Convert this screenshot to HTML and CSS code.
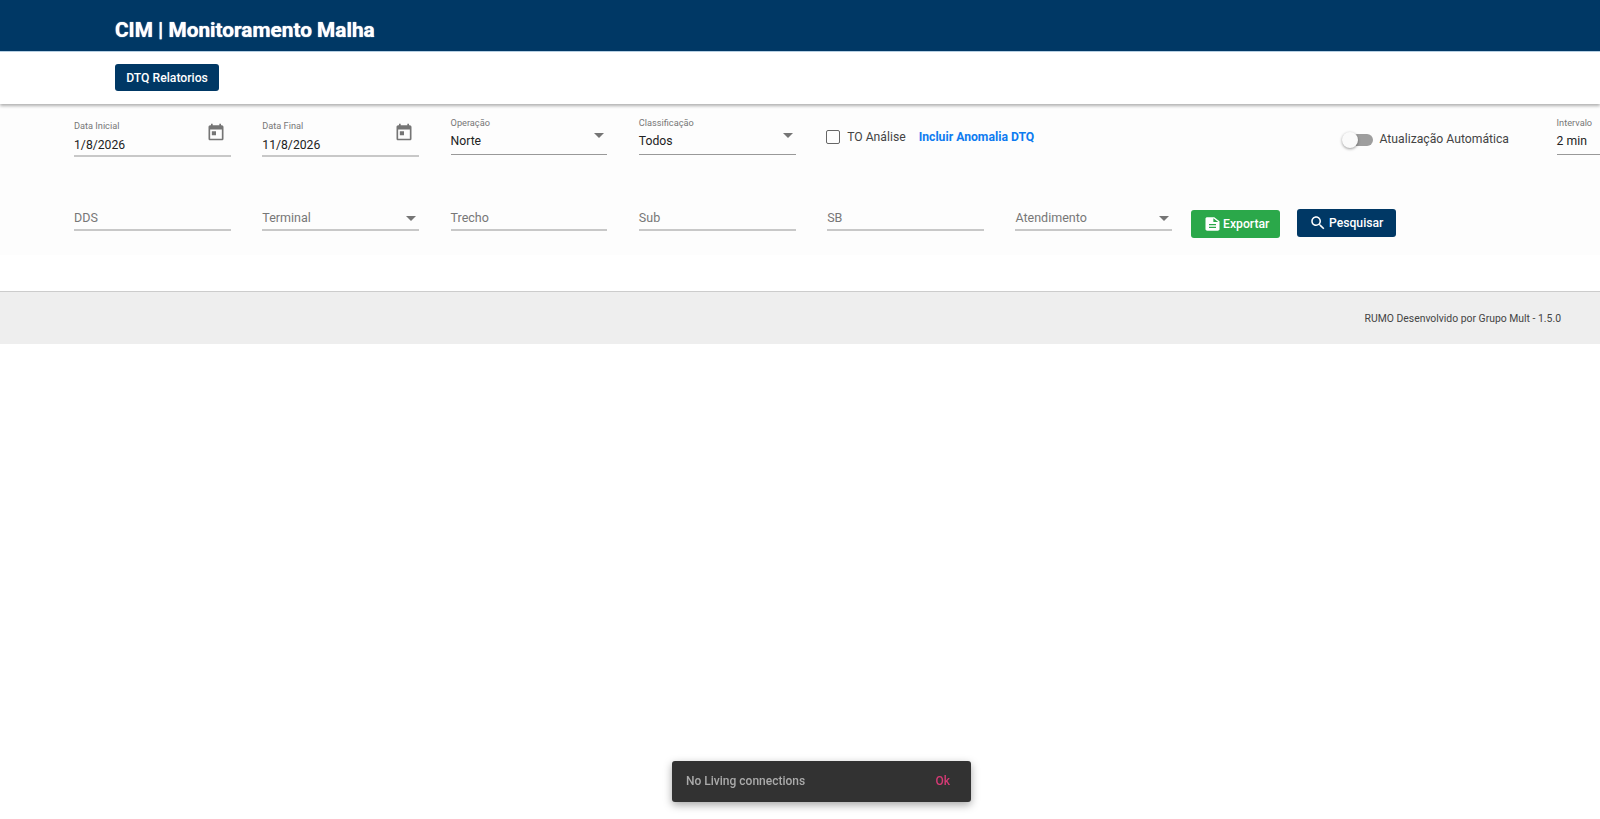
FILE: index.html
```html
<!DOCTYPE html>
<html lang="pt-BR">
<head>
    <meta charset="UTF-8">
    <meta name="viewport" content="width=device-width, initial-scale=1.0">
    <title>CIM | Monitoramento Malha</title>
    <link rel="stylesheet" href="styles.css">
</head>
<body>
    <header class="topbar">
        <h1>CIM | Monitoramento Malha</h1>
    </header>

    <nav class="subbar">
        <button class="btn btn-navy btn-nav">DTQ Relatorios</button>
    </nav>

    <!-- Filtros -->
    <section class="filters">
        <div class="filter-row row-top">
            <div class="field field-date">
                <span class="field-label">Data Inicial</span>
                <span class="field-value">1/8/2026</span>
                <svg class="icon-date" viewBox="0 0 24 24"><path d="M19 4h-1V2h-2v2H8V2H6v2H5c-1.11 0-1.99.9-1.99 2L3 20c0 1.1.89 2 2 2h14c1.1 0 2-.9 2-2V6c0-1.1-.9-2-2-2zm0 16H5V9h14v11zM7 11h5v5H7z"/></svg>
            </div>
            <div class="field field-date">
                <span class="field-label">Data Final</span>
                <span class="field-value">11/8/2026</span>
                <svg class="icon-date" viewBox="0 0 24 24"><path d="M19 4h-1V2h-2v2H8V2H6v2H5c-1.11 0-1.99.9-1.99 2L3 20c0 1.1.89 2 2 2h14c1.1 0 2-.9 2-2V6c0-1.1-.9-2-2-2zm0 16H5V9h14v11zM7 11h5v5H7z"/></svg>
            </div>
            <div class="field field-select">
                <span class="field-label">Operação</span>
                <span class="field-value">Norte</span>
                <span class="arrow arrow-top"></span>
            </div>
            <div class="field field-select">
                <span class="field-label">Classificação</span>
                <span class="field-value">Todos</span>
                <span class="arrow arrow-top"></span>
            </div>
            <div class="check-group">
                <span class="checkbox"></span>
                <span class="check-label">TO Análise</span>
                <a class="link-anomalia">Incluir Anomalia DTQ</a>
            </div>
            <div class="toggle-group">
                <span class="toggle"><span class="toggle-thumb"></span></span>
                <span class="toggle-label">Atualização Automática</span>
            </div>
            <div class="field field-select field-interval">
                <span class="field-label">Intervalo</span>
                <span class="field-value">2 min</span>
            </div>
        </div>

        <div class="filter-row row-bottom">
            <div class="field field-text"><span class="placeholder">DDS</span></div>
            <div class="field field-text"><span class="placeholder">Terminal</span><span class="arrow"></span></div>
            <div class="field field-text"><span class="placeholder">Trecho</span></div>
            <div class="field field-text"><span class="placeholder">Sub</span></div>
            <div class="field field-text"><span class="placeholder">SB</span></div>
            <div class="field field-text"><span class="placeholder">Atendimento</span><span class="arrow"></span></div>
            <div class="actions">
                <button class="btn btn-green">
                    <svg class="icon-doc" viewBox="0 0 24 24" preserveAspectRatio="none"><path d="M14 2H6c-1.1 0-1.99.9-1.99 2L4 20c0 1.1.89 2 2 2h12c1.1 0 2-.9 2-2V8l-6-6zm2 16H8v-2h8v2zm0-4H8v-2h8v2zm-3-5V3.5L18.5 9H13z"/></svg>
                    Exportar
                </button>
                <button class="btn btn-navy">
                    <svg viewBox="0 0 24 24"><path d="M15.5 14h-.79l-.28-.27C15.41 12.59 16 11.11 16 9.5 16 5.91 13.09 3 9.5 3S3 5.91 3 9.5 5.91 16 9.5 16c1.61 0 3.09-.59 4.23-1.57l.27.28v.79l5 4.99L20.49 19l-4.99-5zm-6 0C7.01 14 5 11.99 5 9.5S7.01 5 9.5 5 14 7.01 14 9.5 11.99 14 9.5 14z"/></svg>
                    Pesquisar
                </button>
            </div>
        </div>
    </section>

    <footer class="footer">RUMO Desenvolvido por Grupo Mult - 1.5.0</footer>

    <div class="snackbar">
        <span>No Living connections</span>
        <span class="snackbar-action">Ok</span>
    </div>
</body>
</html>
```

FILE: styles.css
```css
* {
    box-sizing: border-box;
    margin: 0;
    padding: 0;
    font-family: Roboto, 'Liberation Sans', sans-serif;
}

html, body {
    height: 100%;
    overflow: hidden;
}

body {
    background-color: #fff;
    color: #333;
}

.topbar {
    height: 52px;
    padding-left: 115px;
    background-color: #003865;
    border-bottom: 1px solid #b9d3e6;
    display: flex;
    align-items: center;
}

.topbar h1 {
    color: #fff;
    font-size: 20.8px;
    font-weight: 700;
    margin-top: 8px;
    text-shadow: 0 0 1px #fff;
}

.subbar {
    height: 52px;
    padding: 12px 0 0 115px;
    background-color: #fff;
    box-shadow: 0 2px 3px rgba(0,0,0,0.3);
    position: relative;
}

.btn {
    display: inline-flex;
    align-items: center;
    justify-content: center;
    height: 28px;
    border: none;
    border-radius: 3px;
    color: #fff;
    font-size: 12.2px;
    font-weight: 500;
    cursor: pointer;
}

.btn svg {
    width: 18px;
    height: 18px;
    fill: #fff;
    margin-right: 2px;
}

.btn .icon-doc {
    width: 21px;
    height: 16px;
    margin: 0 0 0 1px;
}

.btn-navy {
    background-color: #003865;
}

.btn-green {
    background-color: #2ba84a;
}

.btn-nav {
    width: 104px;
    height: 27px;
}

.filters {
    height: 151px;
    background-color: #fdfdfd;
    overflow: hidden;
}

.filter-row {
    display: flex;
    padding-left: 74px;
    gap: 31.6px;
    width: 1700px;
}

.row-top {
    height: 103px;
    padding-top: 11px;
}

.field {
    position: relative;
    width: 156.7px;
    flex: none;
}

.field-label {
    display: block;
    font-size: 9.2px;
    line-height: 12px;
    color: #777;
}

.field-value {
    display: block;
    font-size: 12.2px;
    line-height: 18px;
    color: #222;
}

.field-date {
    height: 42px;
    padding-top: 5px;
    border-bottom: 2px solid #c8c8c8;
}

.field-date .field-value {
    margin-top: 4px;
}

.field-select {
    height: 40px;
    padding-top: 2px;
    border-bottom: 1px solid #999;
}

.field-select .field-value {
    margin-top: 3px;
}

.icon-date {
    position: absolute;
    right: 5px;
    top: 7px;
    width: 20px;
    height: 20px;
    fill: #757575;
}

.arrow {
    position: absolute;
    right: 3px;
    top: 9.5px;
    border-left: 5px solid transparent;
    border-right: 5px solid transparent;
    border-top: 5px solid #757575;
}

.arrow-top {
    top: 18px;
    right: 3px;
}

.check-group {
    display: flex;
    align-items: center;
    flex: none;
    width: 482.8px;
    height: 46px;
}

.checkbox {
    width: 14px;
    height: 14px;
    border: 1.5px solid #666;
    border-radius: 2px;
    margin-right: 7px;
    margin-top: -2px;
    margin-left: -1px;
}

.check-label {
    font-size: 12.2px;
    color: #444;
    margin-right: 13px;
    margin-top: -2px;
}

.link-anomalia {
    font-size: 12.2px;
    font-weight: 700;
    color: #0d7bf0;
    margin-top: -2px;
}

.toggle-group {
    display: flex;
    align-items: center;
    flex: none;
    width: 183.5px;
    height: 50px;
}

.toggle {
    position: relative;
    display: block;
    flex: none;
    width: 27px;
    height: 12px;
    margin: 0 7px 0 4px;
    border-radius: 6px;
    background-color: #9e9e9e;
}

.toggle-thumb {
    position: absolute;
    left: -4px;
    top: -2px;
    width: 16px;
    height: 16px;
    border-radius: 50%;
    background-color: #fafafa;
    box-shadow: 0 1px 3px rgba(0,0,0,0.4);
}

.toggle-label {
    font-size: 12.2px;
    color: #444;
    white-space: nowrap;
    margin-top: -2px;
}

.field-text {
    height: 25px;
    border-bottom: 2px solid #c8c8c8;
    margin-top: -1px;
}

.placeholder {
    display: block;
    font-size: 12.5px;
    line-height: 24px;
    color: #777;
}

.actions {
    display: flex;
    gap: 17px;
    margin-left: -13px;
    margin-top: 3px;
}

.actions .btn-green {
    width: 89px;
}

.actions .btn-navy {
    width: 99px;
    margin-top: -1px;
}

.footer {
    height: 53px;
    margin-top: 36px;
    padding-right: 39px;
    background-color: #eee;
    border-top: 1px solid #ccc;
    font-size: 10.4px;
    color: #444;
    display: flex;
    align-items: center;
    justify-content: flex-end;
}

.snackbar {
    position: fixed;
    left: 672px;
    top: 761px;
    width: 299px;
    height: 41px;
    padding: 0 21px 2px 14px;
    background-color: #323232;
    border-radius: 3px;
    box-shadow: 0 3px 8px rgba(0,0,0,0.35);
    color: #aaa;
    font-size: 12px;
    font-weight: 500;
    display: flex;
    align-items: center;
    justify-content: space-between;
}

.snackbar-action {
    color: #d63a75;
}
```
